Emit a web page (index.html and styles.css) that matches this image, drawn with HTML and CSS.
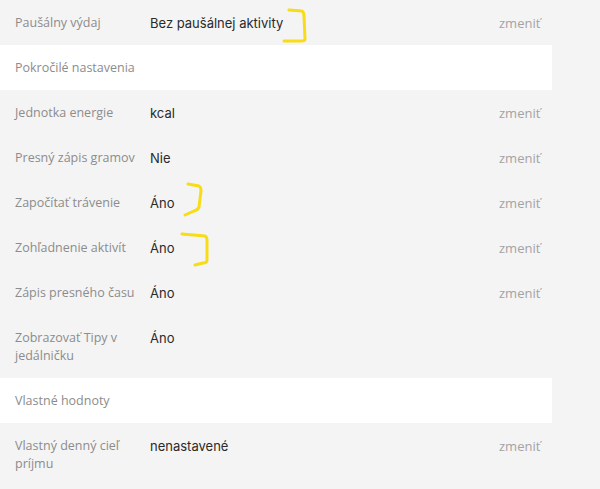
FILE: index.html
```html
<!DOCTYPE html>
<html lang="sk">
<head>
<meta charset="utf-8">
<link rel="stylesheet" href="styles.css">
</head>
<body>
<div class="page">
  <div class="row"><div class="label">Paušálny výdaj</div><div class="value">Bez paušálnej aktivity</div><div class="action">zmeniť</div></div>
  <div class="section">Pokročilé nastavenia</div>
  <div class="row"><div class="label">Jednotka energie</div><div class="value">kcal</div><div class="action">zmeniť</div></div>
  <div class="row"><div class="label">Presný zápis gramov</div><div class="value">Nie</div><div class="action">zmeniť</div></div>
  <div class="row"><div class="label">Započítať trávenie</div><div class="value">Áno</div><div class="action">zmeniť</div></div>
  <div class="row"><div class="label">Zohľadnenie aktivít</div><div class="value">Áno</div><div class="action">zmeniť</div></div>
  <div class="row"><div class="label">Zápis presného času</div><div class="value">Áno</div><div class="action">zmeniť</div></div>
  <div class="row"><div class="label">Zobrazovať Tipy v jedálničku</div><div class="value">Áno</div><div class="action"></div></div>
  <div class="section">Vlastné hodnoty</div>
  <div class="row"><div class="label">Vlastný denný cieľ príjmu</div><div class="value">nenastavené</div><div class="action">zmeniť</div></div>
</div>
<svg class="marks" width="600" height="489" viewBox="0 0 600 489">
  <path d="M289 10 L302 11 Q304 12 304 16 L305 39 Q305 41 301 41 L284 41"/>
  <path d="M188 184 L199 186 Q201 187 201 191 L199 207 Q198 210 194 211 L185 215"/>
  <path d="M182 234 L205 236 Q207 237 207 240 L207 260 Q207 263 203 263 L195 265"/>
</svg>
</body>
</html>
```

FILE: styles.css
```css
html, body {
  margin: 0;
  padding: 0;
  background: #f4f4f4;
}
body {
  width: 600px;
  height: 489px;
  overflow: hidden;
  position: relative;
}
.page {
  width: 552px;
}
.row {
  display: flex;
  align-items: flex-start;
  padding: 14px 0 13px 15px;
  line-height: 18px;
}
.label {
  width: 135px;
  flex: none;
  font-family: "Open Sans", sans-serif;
  font-weight: 500;
  font-size: 12.5px;
  color: #8c8c8c;
}
.value {
  flex: 1;
  font-family: Inter, sans-serif;
  font-size: 13px;
  color: #2a2a2a;
}
.action {
  width: 53px;
  flex: none;
  font-family: "Open Sans", sans-serif;
  font-size: 13px;
  color: #a3a3a3;
}
.section {
  background: #fff;
  padding: 14px 15px 13px;
  line-height: 18px;
  font-family: "Open Sans", sans-serif;
  font-weight: 500;
  font-size: 12.5px;
  color: #8c8c8c;
}
.marks {
  position: absolute;
  left: 0;
  top: 0;
  pointer-events: none;
}
.marks path {
  fill: none;
  stroke: #f7dc16;
  stroke-width: 3;
  stroke-linecap: round;
  stroke-linejoin: round;
}
```
